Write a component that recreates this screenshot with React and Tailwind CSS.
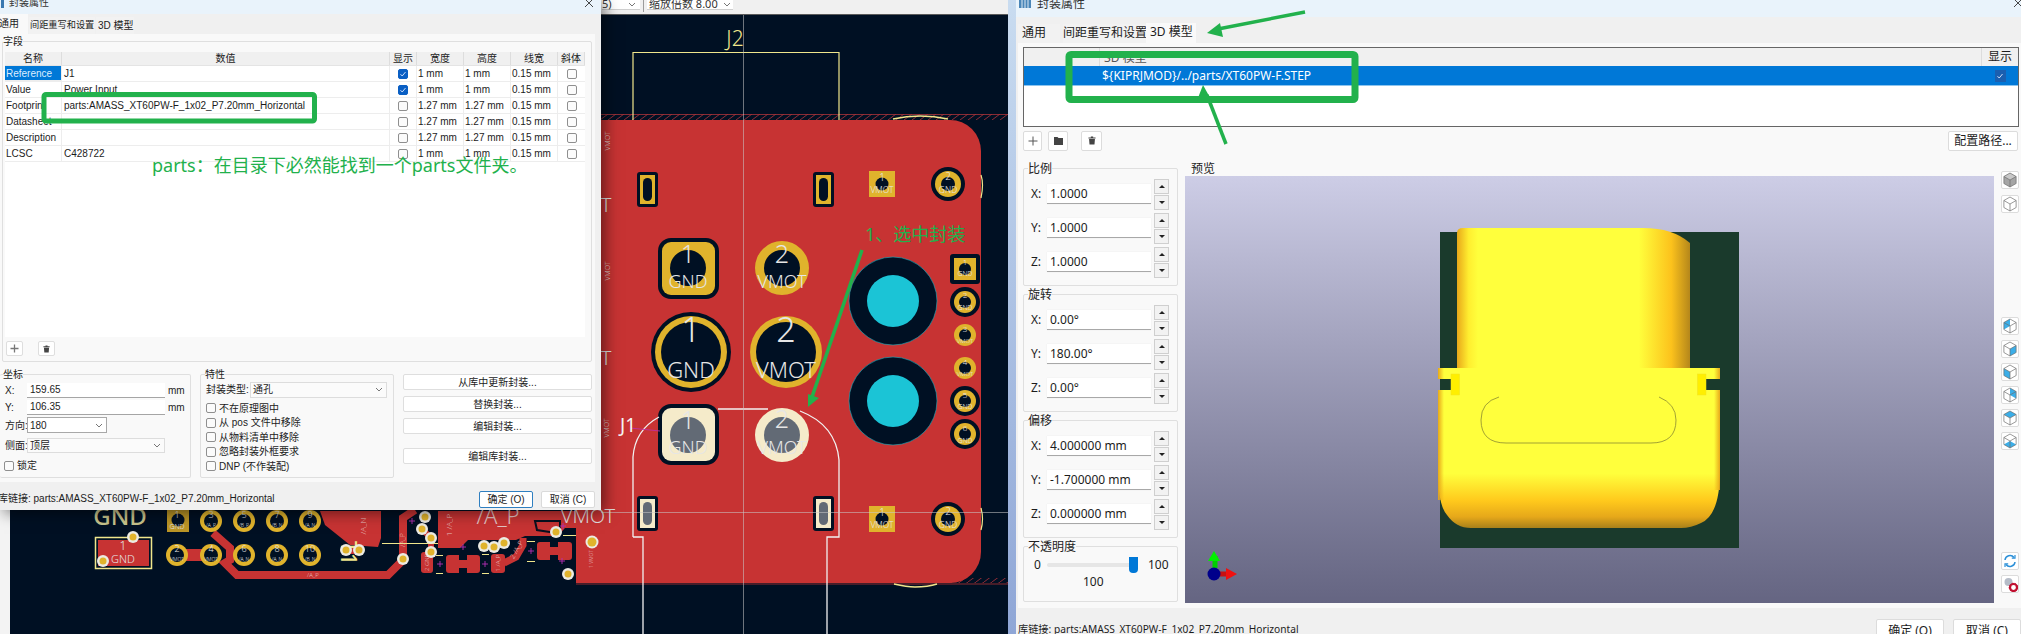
import React from "react";

const Check = ({ on, className = "" }) => (
  <span className={"inline-flex items-center justify-center w-[10px] h-[10px] rounded-[2px] border shrink-0 " + (on ? "bg-[#0a5fc4] border-[#0a5fc4] " : "bg-[#fbfbfb] border-[#8f8f8f] ") + className}>
    {on && (
      <svg width="8" height="8" viewBox="0 0 8 8"><path d="M1.5 4.2 3.2 6 6.5 2" fill="none" stroke="#dfeaff" strokeWidth="0.9" /></svg>
    )}
  </span>
);

const Chevron = ({ className = "" }) => (
  <svg width="8" height="5" viewBox="0 0 8 5" className={className}><path d="M1 1l3 3 3-3" fill="none" stroke="#777" strokeWidth="1" /></svg>
);

const Group = ({ label, className = "", labelClass = "", children }) => (
  <div className={"relative border border-[#dfdfdf] rounded-[2px] " + className}>
    <span className={"absolute left-[4px] -top-[7px] leading-[14px] bg-[#f9f9f9] text-[#222] whitespace-nowrap " + labelClass}>{label}</span>
    {children}
  </div>
);

const TrashIcon = ({ s = 9 }) => (
  <svg width={s} height={s + 1} viewBox="0 0 9 10"><path d="M3.2 0.5h2.6v1H8.5v1.2H.5V1.500h2.700zM1.200 3.300h6.600l-.5 6.200H1.700z" fill="#444" /></svg>
);

const fieldRows = [
  ["Reference", "J1", true, "1 mm", "1 mm"],
  ["Value", "Power Input", true, "1 mm", "1 mm"],
  ["Footprint", "parts:AMASS_XT60PW-F_1x02_P7.20mm_Horizontal", false, "1.27 mm", "1.27 mm"],
  ["Datasheet", "", false, "1.27 mm", "1.27 mm"],
  ["Description", "", false, "1.27 mm", "1.27 mm"],
  ["LCSC", "C428722", false, "1 mm", "1 mm"],
];

const heads = ["名称", "数值", "显示", "宽度", "高度", "线宽", "斜体"];

const LeftDialog = () => (
  <div className="absolute left-0 top-0 w-[601px] h-[510px] flex flex-col bg-[#f0f0f0] text-[10px] text-[#1c1c1c] font-['Liberation_Sans','Noto_Sans_CJK_SC',sans-serif] shadow-[4px_3px_14px_rgba(0,0,0,0.5)]">
    <div className="h-[14px] shrink-0 bg-[#e9f3fb] flex items-center relative">
      <span className="ml-[1px] w-[3px] h-[8px] bg-[#3a78b0] -mt-[6px]" />
      <span className="ml-[5px] -mt-[9px] text-[#333]">封装属性</span>
      <svg className="absolute right-[7px] -top-[2px]" width="10" height="10" viewBox="0 0 10 10"><path d="M1 1l8 8M9 1l-8 8" stroke="#333" strokeWidth="0.9" /></svg>
    </div>
    <div className="h-[20px] shrink-0 flex items-end whitespace-nowrap">
      <div className="w-[28px] h-[20px] bg-[#f9f9f9] flex items-center pb-[1px]"><span className="-ml-[1px]">通用</span></div>
      <div className="ml-[1px] w-[66px] h-[17px] px-[1px] bg-[#f2f2f2] flex items-center text-[9.2px]">间距重写和设置</div>
      <div className="ml-[1px] w-[38px] h-[17px] px-[2px] bg-[#f2f2f2] flex items-center">3D 模型</div>
    </div>
    <div className="h-[448px] w-[595px] shrink-0 bg-[#f9f9f9] pt-[7px] pl-[2px]">
      <Group label="字段" className="w-[590px] h-[321px] pt-[10px] pl-[2px]" labelClass="!left-[0px]">
        <div className="w-[580px] h-[285px] bg-white">
          <div className="grid grid-cols-[57px_328px_27px_47px_47px_47px_27px] h-[14px] bg-[#f0f0f0] border-b border-[#e4e4e4]">
            {heads.map((h) => (
              <div key={h} className="flex items-center justify-center border-r border-[#dddddd] leading-none">{h}</div>
            ))}
          </div>
          {fieldRows.map((r) => (
            <div key={r[0]} className="grid grid-cols-[57px_328px_27px_47px_47px_47px_27px] h-[16px] border-b border-[#ededed] leading-[15px]">
              <div className={"pl-[1px] border-r border-[#ededed] overflow-hidden whitespace-nowrap " + (r[0] === "Reference" ? "bg-[#0078d7] text-[#dceeff] border-b border-[#64aee8]" : "")}>{r[0]}</div>
              <div className="pl-[2px] border-r border-[#ededed] whitespace-nowrap">{r[1]}</div>
              <div className="flex items-center justify-center border-r border-[#ededed]"><Check on={r[2]} /></div>
              <div className="pl-[1px] border-r border-[#ededed] whitespace-nowrap">{r[3]}</div>
              <div className="pl-[1px] border-r border-[#ededed] whitespace-nowrap">{r[4]}</div>
              <div className="pl-[1px] border-r border-[#ededed] whitespace-nowrap">0.15 mm</div>
              <div className="flex items-center justify-center"><Check /></div>
            </div>
          ))}
        </div>
        <div className="flex mt-[4px] ml-[1px]">
          <div className="w-[17px] h-[15px] bg-white border border-[#dedede] rounded-[2px] flex items-center justify-center">
            <svg width="9" height="9" viewBox="0 0 9 9"><path d="M4.500.5v8M.5 4.500h8" stroke="#777" strokeWidth="1.300" /></svg>
          </div>
          <div className="ml-[15px] w-[17px] h-[15px] bg-white border border-[#dedede] rounded-[2px] flex items-center justify-center"><TrashIcon s={7} /></div>
        </div>
      </Group>
      <div className="flex mt-[12px] -ml-[2px]">
        <Group label="坐标" className="w-[191px] h-[104px] pl-[5px] pt-[7px] border-l-0" labelClass="!left-[3px]">
          <div className="flex items-center h-[16px] w-[180px]">
            <span className="w-[22px]">X:</span>
            <div className="w-[138px] h-[15px] bg-white border-b border-[#a5a5a5] pl-[3px] leading-[14px]">159.65</div>
            <span className="ml-[3px]">mm</span>
          </div>
          <div className="flex items-center h-[16px] mt-[1px]">
            <span className="w-[22px]">Y:</span>
            <div className="w-[138px] h-[15px] bg-white border-b border-[#a5a5a5] pl-[3px] leading-[14px]">106.35</div>
            <span className="ml-[3px]">mm</span>
          </div>
          <div className="flex items-center h-[16px] mt-[2px]">
            <span className="w-[22px] whitespace-nowrap">方向:</span>
            <div className="w-[80px] h-[16px] bg-white border border-[#a8a8a8] pl-[2px] flex items-center justify-between pr-[3px]">180<Chevron /></div>
          </div>
          <div className="flex items-center h-[16px] mt-[4px]">
            <span className="w-[22px] whitespace-nowrap">侧面:</span>
            <div className="w-[138px] h-[15px] bg-[#fbfbfb] border border-[#dddddd] pl-[2px] flex items-center justify-between pr-[3px]">顶层<Chevron /></div>
          </div>
          <div className="flex items-center mt-[5px] -ml-[1px]"><Check /><span className="ml-[3px]">锁定</span></div>
        </Group>
        <Group label="特性" className="ml-[9px] w-[194px] h-[104px] pl-[5px] pt-[6px]">
          <div className="flex items-center h-[17px]">
            <span className="w-[44px] whitespace-nowrap">封装类型:</span>
            <div className="w-[137px] h-[16px] bg-[#fbfbfb] border border-[#dddddd] pl-[2px] flex items-center justify-between pr-[3px]">通孔<Chevron /></div>
          </div>
          <div className="mt-[5px] flex flex-col gap-[4.500px]">
            {["不在原理图中", "从 pos 文件中移除", "从物料清单中移除", "忽略封装外框要求", "DNP (不作装配)"].map((t) => (
              <div key={t} className="flex items-center h-[10px]"><Check /><span className="ml-[3px] whitespace-nowrap">{t}</span></div>
            ))}
          </div>
        </Group>
        <div className="ml-[9px] w-[189px] flex flex-col">
          {["从库中更新封装...", "替换封装...", "编辑封装..."].map((t) => (
            <div key={t} className="h-[16px] mb-[6px] bg-white border border-[#dedede] rounded-[2px] flex items-center justify-center">{t}</div>
          ))}
          <div className="h-[16px] mt-[8px] bg-white border border-[#dedede] rounded-[2px] flex items-center justify-center">编辑库封装...</div>
        </div>
      </div>
    </div>
    <div className="flex-1 relative flex items-start pt-[9px]">
      <span className="whitespace-nowrap -ml-[2px]">库链接: parts:AMASS_XT60PW-F_1x02_P7.20mm_Horizontal</span>
      <div className="ml-auto mr-[6px] flex">
        <div className="w-[54px] h-[17px] bg-white border border-[#2f7fc0] rounded-[2px] flex items-center justify-center">确定 (O)</div>
        <div className="ml-[8px] w-[54px] h-[17px] bg-white border border-[#dadada] rounded-[2px] flex items-center justify-center">取消 (C)</div>
      </div>
    </div>
  </div>
);

const INK = "#001023";
const GOLD = "#e0b32c";
const RED = "#c73333";
const CREAM = "#f5ebca";
const SILK = "#f0e68c";

const Label = ({ x, y, size, children, fill = "#e6e6e6", rotate, anchor = "middle", weight = 300 }) => (
  <text x={x} y={y} fontSize={size} fill={fill} textAnchor={anchor} dominantBaseline="middle" fontWeight={weight} transform={rotate ? `rotate(${rotate} ${x} ${y})` : undefined}>{children}</text>
);

const Round = ({ x, y, r, hole, halo, num, net, numSize = 8, netSize = 7, fill = GOLD, holeFill = INK, numY, netY }) => (
  <g>
    {halo && <circle cx={x} cy={y} r={halo} fill={INK} />}
    <circle cx={x} cy={y} r={r} fill={fill} />
    <circle cx={x} cy={y} r={hole} fill={holeFill} />
    {num && <Label x={x} y={numY ?? y - r * 0.5} size={numSize}>{num}</Label>}
    {net && <Label x={x} y={netY ?? y + r * 0.6} size={netSize}>{net}</Label>}
  </g>
);

const Oval = ({ x, y, fill = GOLD, hole = INK }) => (
  <g>
    <rect x={x} y={y} width="21" height="35" rx="3" fill={INK} />
    <rect x={x + 3} y={y + 3} width="15" height="29" fill={fill} />
    <rect x={x + 6} y={y + 6} width="9" height="23" rx="4.500" fill={hole} />
  </g>
);

const Via = ({ x, y, r = 6 }) => (
  <g>
    <circle cx={x} cy={y} r={r} fill="#ecebe3" />
    <circle cx={x} cy={y} r={r - 2.500} fill={GOLD} />
  </g>
);

const Plus = ({ x, y }) => <path d={`M${x - 3} ${y}h6M${x} ${y - 3}v6`} stroke="#b52fb5" strokeWidth="0.9" />;

const SmallSq = ({ x, y, s, num, net }) => (
  <g>
    <rect x={x} y={y} width={s} height={s} fill={GOLD} />
    <circle cx={x + s / 2} cy={y + s / 2} r="6.500" fill={INK} />
    <Label x={x + s / 2} y={y + s * 0.3} size="10">{num}</Label>
    <Label x={x + s / 2} y={y + s * 0.76} size="8.500">{net}</Label>
  </g>
);

const Pcb = () => (
  <svg width="998" height="619" viewBox="10 15 998 619" className="block">
    <rect x="10" y="15" width="998" height="619" fill={INK} />
    <defs>
      <pattern id="hatch" width="8" height="6" patternUnits="userSpaceOnUse">
        <path d="M0 6 8 0" stroke="#b23238" strokeWidth="0.8" />
      </pattern>
    </defs>
    <rect x="601" y="114" width="407" height="6" fill="url(#hatch)" />
    <path d="M601 114.500H1008" stroke="#a8333a" strokeWidth="0.8" />
    <rect x="940" y="578" width="68" height="5" fill="url(#hatch)" />
    <path d="M576 584H1008" stroke="#8c2a30" strokeWidth="1.200" />
    <text x="735" y="40" fontSize="21" fill={SILK} textAnchor="middle" dominantBaseline="middle" fontWeight="300">J2</text>
    <path d="M633 120V52.500H839V120" fill="none" stroke={SILK} strokeWidth="1.200" />
    <path d="M893 119Q920 113 948 119" fill="none" stroke={SILK} strokeWidth="1.500" />

    {/* board */}
    <path d="M576 120H950a31 31 0 0 1 31 31V552a31 31 0 0 1-31 31H576z" fill={RED} />
    <path d="M438 511H602V583H576V528H565L558 536H525L516 540H468L460 548H438z" fill={RED} />
    <path d="M320 511L325 525 350 545 378 547 381 538V511z" fill={RED} />
    <path d="M213 533L230 548V560L225 563 237 575H388L403 560V518L415 510" fill="none" stroke={RED} strokeWidth="8" />
    <path d="M422 529L431 538V552" fill="none" stroke={RED} strokeWidth="6" />
    <rect x="177" y="549" width="34" height="12" fill={RED} />
    <path d="M346 550H359" stroke={RED} strokeWidth="8" />
    <path d="M535 521H560V530L556 533 537 530z" fill={RED} stroke="#08101f" strokeWidth="2" />
    <path d="M981 175Q984 184 981 198M981 508Q984 519 981 530" fill="none" stroke={SILK} strokeWidth="1.200" />
    <path d="M894 584Q907 587 915 587 928 587 937 584" fill="none" stroke={SILK} strokeWidth="1.500" />

    {/* vertical net names */}
    <Label x={608} y={141} size="7" rotate={-90} fill="#e0d0d0">VMOT</Label>
    <Label x={608} y={271} size="7" rotate={-90} fill="#e0d0d0">VMOT</Label>
    <Label x={607} y={428} size="7" rotate={-90} fill="#e0d0d0">VMOT</Label>
    <Label x={606} y={207} size="20" anchor="middle">T</Label>
    <Label x={606} y={360} size="20" anchor="middle">T</Label>

    {/* top row */}
    <Oval x={637} y={172} />
    <Oval x={813} y={172} />
    <SmallSq x={869} y={171} s={26} num="1" net="VMOT" />
    <Round x={948} y={184} r={13} hole={7} halo={17} num="2" net="GND" numSize={10} netSize={8.500} numY={177} netY={191} />

    {/* large pads */}
    <rect x="658" y="238" width="61" height="61" rx="13" fill={INK} />
    <rect x="662" y="242" width="53" height="53" rx="9" fill={GOLD} />
    <circle cx="688" cy="268" r="18" fill={INK} />
    <Label x={688} y={256} size="25">1</Label>
    <Label x={688} y={283} size="18">GND</Label>
    <Round x={782} y={268} r={27} hole={18} num="2" net="VMOT" numSize={25} netSize={18} numY={256} netY={283} />

    <Round x={691} y={352} r={36} hole={30} halo={40} num="1" net="GND" numSize={34} netSize={22} numY={333} netY={372} />
    <Round x={786} y={352} r={36} hole={30} num="2" net="VMOT" numSize={34} netSize={22} numY={333} netY={372} />

    {/* selected footprint */}
    <rect x="658" y="404" width="61" height="61" rx="13" fill={INK} />
    <rect x="662" y="408" width="53" height="53" rx="9" fill={CREAM} />
    <circle cx="688" cy="435" r="18" fill="#626a75" />
    <Label x={688} y={422} size="25">1</Label>
    <Label x={688} y={449} size="18">GND</Label>
    <Round x={782} y={435} r={27} hole={18} fill={CREAM} holeFill="#626a75" num="2" net="VMOT" numSize={25} netSize={18} numY={421} netY={449} />
    <Oval x={637} y={496} fill={CREAM} hole="#626a75" />
    <Oval x={813} y={496} fill={CREAM} hole="#626a75" />
    <path d="M633 537V457Q635 430 659 417M718 409H768M800 411Q836 425 839 460V537H827V634M633 537H643V634" fill="none" stroke="#f2f2f2" strokeWidth="1.300" />
    <path d="M630 428L660 431" stroke="#c02fa0" strokeWidth="0.9" />
    <Label x={628} y={427} size="19" fill="#f5f5f5" weight={400}>J1</Label>

    {/* mounting holes */}
    {[301, 401].map((y) => (
      <g key={y}>
        <circle cx="893" cy={y} r="44" fill={INK} stroke="#1bb4c4" strokeWidth="0.6" />
        <circle cx="893" cy={y} r="26" fill="#1bc4d6" />
      </g>
    ))}

    {/* right header */}
    <rect x="950" y="254" width="30" height="30" rx="3" fill={INK} />
    <rect x="954" y="258" width="22" height="22" fill={GOLD} />
    <circle cx="965" cy="269" r="6" fill={INK} />
    <Label x={965} y={263} size="8">1</Label>
    <Label x={965} y={274} size="7">GND</Label>
    <Round x={965} y={302} r={11} hole={6} halo={15} num="2" net="GND" numY={296} netY={308} />
    <Round x={965} y={335} r={11} hole={6} num="3" net="VMOT" numSize={8} netSize={6} numY={330} netY={341} />
    <Round x={965} y={368} r={11} hole={6} num="4" net="VMOT" numSize={8} netSize={6} numY={363} netY={374} />
    <Round x={965} y={401} r={11} hole={6} halo={15} num="5" net="GND" numY={396} netY={407} />
    <Round x={965} y={434} r={11} hole={6} halo={15} num="6" net="GND" numY={429} netY={441} />

    {/* bottom row right */}
    <SmallSq x={869} y={506} s={26} num="1" net="VMOT" />
    <Round x={948} y={519} r={13} hole={7} halo={17} num="2" net="GND" numSize={10} netSize={8.500} numY={512} netY={526} />

    {/* crosshair */}
    <path d="M743.500 15V634" stroke="#c9c9c9" strokeOpacity="0.55" strokeWidth="1" />
    <path d="M601 512.500H1008" stroke="#c9c9c9" strokeOpacity="0.55" strokeWidth="1" />

    {/* bottom left header */}
    <Label x={120} y={519} size="24" fill="#c9c48c" weight={500}>GND</Label>
    <rect x="167" y="510" width="22" height="22" fill="#bb9526" />
    <circle cx="178" cy="520" r="6.500" fill={INK} />
    <Label x={177} y={516} size="9">1</Label>
    <Label x={177} y={527} size="7">GND</Label>
    {[[211, 521, "3", "/A_P"], [244, 521, "5", "/B_P"], [277, 521, "7", "/B_N"], [310, 521, "9", "/A_N"], [177, 555, "2", "VMOT"], [211, 555, "4", "VMOT"], [244, 555, "6", "/A_N"], [277, 555, "8", "/A_N"], [310, 555, "10", "/B_N"]].map(([x, y, n, l]) => (
      <Round key={n} x={x} y={y} r={11} hole={7} num={n} net={l} numSize={9} netSize={5} numY={y - 5} netY={y + 5} />
    ))}
    <rect x="95.500" y="537.500" width="56" height="31" fill="none" stroke={SILK} strokeWidth="1.500" />
    <rect x="98" y="540" width="51" height="26" fill={RED} />
    <Label x={123} y={547} size="12">1</Label>
    <Label x={123} y={560} size="11">GND</Label>
    <Via x={133} y={537} />
    <Via x={103} y={561} />

    {/* T1 silk */}
    <Label x={347} y={553} size="21" fill={SILK} rotate={90} weight={500}>T1</Label>
    <Via x={346} y={550} />
    <Via x={359} y={550} />
    <path d="M382 543.500H438" stroke={SILK} strokeWidth="1.200" />
    <Label x={313} y={575} size="6" fill="#e6bcbc">/A_P</Label>
    <Label x={364} y={526} size="8" rotate={-90} fill="#e6bcbc">/A_N</Label>
    <Label x={403} y={540} size="7" rotate={-90} fill="#e6bcbc">/A_P</Label>
    <Label x={450} y={525} size="8" rotate={-90} fill="#e6bcbc">1 /A_P</Label>

    {/* big net names */}
    <Label x={498} y={518} size="22" fill="#e3c3c3">/A_P</Label>
    <Label x={588} y={518} size="20" fill="#e3dede">VMOT</Label>

    {/* small parts */}
    <rect x="421" y="552" width="12" height="21" rx="3" fill={RED} />
    <path d="M446 558a3 3 0 0 1 3-3H459V560H467V555H477a3 3 0 0 1 3 3V570a3 3 0 0 1-3 3H467V568H459V573H449a3 3 0 0 1-3-3z" fill={RED} />
    <rect x="491" y="554" width="14" height="19" rx="3" fill={RED} />
    <path d="M504 563L516 557 523 545V538" fill="none" stroke={RED} strokeWidth="7" />
    <path d="M537 545a3 3 0 0 1 3-3H550V547H558V542H569a3 3 0 0 1 3 3V557a3 3 0 0 1-3 3H558V555H550V560H540a3 3 0 0 1-3-3z" fill={RED} />
    <Label x={427} y={562} size="6" rotate={-90} fill="#e6bcbc">2 GND</Label>
    <Label x={498} y={563} size="6" rotate={-90} fill="#e6bcbc">1 /A_P</Label>
    <Label x={517} y={550} size="7" rotate={-60} fill="#e6bcbc">2 /A_P</Label>
    <path d="M527 541.500H535M527 561.500H535M436 555.500H443M436 573.500H443M482 554.500H489M482 573.500H489M563 535.500H576" stroke={SILK} strokeWidth="1.200" />
    {[[412, 521], [463, 547], [440, 564], [485, 564], [531, 551], [563, 526], [562, 561]].map(([x, y]) => <Plus key={x} x={x} y={y} />)}
    {[[425, 517], [422, 529], [431, 538], [431, 552], [403, 559], [484, 546], [494, 547], [504, 543], [556, 532], [568, 574]].map(([x, y]) => <Via key={x + "-" + y} x={x} y={y} />)}
    <circle cx="592" cy="542" r="6.500" fill="#ecebe3" />
    <circle cx="592" cy="542" r="4.500" fill={GOLD} />
    <Label x={592} y={559} size="5" rotate={-90} fill="#e6bcbc">1 VMOT</Label>
  </svg>
);

const Spin = () => (
  <div className="ml-[3px] w-[15px] flex flex-col gap-[1px]">
    {[0, 1].map((i) => (
      <div key={i} className="h-[15px] bg-[#f2f2f2] border border-[#cfcfcf] flex items-center justify-center">
        <svg width="6" height="3" viewBox="0 0 6 3"><path d={i === 0 ? "M3 0l3 3H0z" : "M0 0h6L3 3z"} fill="#222" /></svg>
      </div>
    ))}
  </div>
);

const TriGroup = ({ label, values }) => (
  <Group label={label} className="h-[118px] pt-[9px] pl-[7px]" labelClass="text-[12px]">
    {["X:", "Y:", "Z:"].map((a, i) => (
      <div key={a} className="flex items-center h-[32px] mb-[2px]">
        <span className="w-[16px] text-[12px]">{a}</span>
        <div className="w-[104px] h-[20px] bg-white border-b border-[#a8a8a8] pl-[3px] leading-[19px] shadow-[0_0_1px_rgba(0,0,0,0.1)]">{values[i]}</div>
        <Spin />
      </div>
    ))}
  </Group>
);

const cubeFaces = {
  tl: "1,5 8,1 8,9 1,13",
  right: "15,5 15,13 8,17 8,9",
  left: "1,5 8,9 8,17 1,13",
  tr: "8,1 15,5 15,13 8,9",
  top: "8,1 15,5 8,9 1,5",
  bottom: "1,13 8,9 15,13 8,17",
};

const Cube = ({ face, solid }) => (
  <div className="w-[18px] h-[18px] bg-white border border-[#dcdcdc] rounded-[2px] flex items-center justify-center">
    <svg width="14" height="16" viewBox="0 0 16 18">
      {solid && <polygon points="8,1 15,5 15,13 8,17 1,13 1,5" fill="#a5a5a5" />}
      {solid && <polygon points={cubeFaces.top} fill="#c8c8c8" />}
      {face && <polygon points={cubeFaces[face]} fill="#3baee8" />}
      <path d="M8 1l7 4v8l-7 4-7-4V5zM1 5l7 4 7-4M8 9v8" fill="none" stroke="#6f6f6f" strokeWidth="0.8" />
    </svg>
  </div>
);

const Model3D = () => (
  <svg className="block w-full h-full" viewBox="1184 176 809 427">
    <defs>
      <linearGradient id="upper" x1="0" x2="1" y1="0" y2="0">
        <stop offset="0" stopColor="#e8a81a" />
        <stop offset="0.05" stopColor="#ffee30" />
        <stop offset="0.09" stopColor="#ffff3c" />
        <stop offset="0.78" stopColor="#ffff3c" />
        <stop offset="0.92" stopColor="#fcc21c" />
        <stop offset="1" stopColor="#b5871b" />
      </linearGradient>
      <linearGradient id="lower" x1="0" x2="0" y1="0" y2="1">
        <stop offset="0" stopColor="#ffff3c" />
        <stop offset="0.66" stopColor="#ffff3c" />
        <stop offset="0.83" stopColor="#ffc91c" />
        <stop offset="0.93" stopColor="#e6a81a" />
        <stop offset="1" stopColor="#a8801a" />
      </linearGradient>
      <linearGradient id="edgeL" x1="0" x2="1" y1="0" y2="0">
        <stop offset="0" stopColor="#e8a81a" />
        <stop offset="1" stopColor="#e8a81a" stopOpacity="0" />
      </linearGradient>
      <linearGradient id="edgeR" x1="0" x2="1" y1="0" y2="0">
        <stop offset="0" stopColor="#e8a81a" stopOpacity="0" />
        <stop offset="1" stopColor="#e8a81a" />
      </linearGradient>
    </defs>
    <rect x="1439" y="232" width="299" height="316" fill="#1a3a2c" />
    <path d="M1456 368V233q0-5 6-5H1642q30 0 47 15V368z" fill="url(#upper)" />
    <path d="M1437 368H1719V379H1705V390H1719V470Q1719 515 1700 523 1690 528 1680 528H1470Q1455 528 1446 515 1437 505 1437 470V390H1450V379H1437z" fill="url(#lower)" />
    <path d="M1437 368h6v11h-6zM1437 390h6V500h-6z" fill="url(#edgeL)" />
    <path d="M1713 390h6V490h-6zM1713 368h6v11h-6z" fill="url(#edgeR)" />
    <rect x="1450" y="374" width="8.500" height="21" fill="#ffef00" stroke="#f2e220" strokeWidth="0.5" />
    <rect x="1696.500" y="374" width="8.500" height="21" fill="#ffef00" stroke="#f2e220" strokeWidth="0.5" />
    <path d="M1498 397Q1480 402 1480 420 1480 443 1505 443H1650Q1675 443 1675 420 1675 404 1658 397" fill="none" stroke="#8a8a30" strokeWidth="0.8" />
    <path d="M1214 568V556" stroke="#00d000" strokeWidth="5" />
    <path d="M1213 551l6 10h-12z" fill="#00f000" />
    <path d="M1218 574H1228" stroke="#c81010" strokeWidth="5" />
    <path d="M1236 574l-11 6v-12z" fill="#f01010" />
    <circle cx="1213" cy="574" r="6.500" fill="#00008b" />
  </svg>
);

const RightDialog = () => (
  <div className="absolute left-[1016px] top-0 w-[1005px] h-[634px] flex flex-col bg-[#f0f0f0] text-[12px] text-[#1c1c1c]">
    <div className="h-[17px] shrink-0 bg-[#e9f3fb] flex items-start relative">
      <svg className="ml-[3px] -mt-[1px]" width="12" height="9" viewBox="0 0 12 9"><rect width="12" height="9" fill="#4a86b8" /><path d="M3 0v9M6 0v9M9 0v9" stroke="#ddeaf5" /></svg>
      <span className="ml-[6px] -mt-[5px] text-[#333]">封装属性</span>
      <svg className="absolute right-0 -top-[2px]" width="8" height="10" viewBox="0 0 8 10"><path d="M1 1l8 8M9 1l-8 8" stroke="#333" strokeWidth="0.9" /></svg>
    </div>
    <div className="h-[26px] shrink-0 flex items-end pl-[2px]">
      <div className="w-[42px] h-[19px] pl-[4px] bg-[#f2f2f2] leading-[18px]">通用</div>
      <div className="ml-[3px] w-[83px] h-[19px] bg-[#f2f2f2] leading-[18px] whitespace-nowrap">间距重写和设置</div>
      <div className="w-[50px] h-[20px] pl-[4px] bg-[#f9f9f9] leading-[18px] whitespace-nowrap">3D 模型</div>
    </div>
    <div className="h-[565px] shrink-0 ml-[2px] mr-0 bg-[#f9f9f9] pt-[4px] pl-[5px]">
      <div className="w-[996px] h-[80px] bg-white border border-[#666]">
        <div className="flex h-[18px] bg-[#f0f0f0]">
          <div className="w-[76px] border-r border-[#dcdcdc]" />
          <div className="w-[882px] border-r border-[#dcdcdc] pl-[4px] leading-[20px] text-[#555]">3D 模型</div>
          <div className="flex-1 text-center leading-[18px]">显示</div>
        </div>
        <div className="flex h-[20px] bg-[#0078d7] border-b border-[#8cc4ee] text-white leading-[19px]">
          <div className="w-[76px]" />
          <div className="w-[882px] pl-[2px] whitespace-nowrap">{"${KIPRJMOD}/../parts/XT60PW-F.STEP"}</div>
          <div className="flex-1 flex items-center justify-center">
            <span className="w-[11px] h-[12px] bg-[#1a5fb0] flex items-center justify-center">
              <svg width="8" height="8" viewBox="0 0 8 8"><path d="M1.500 4.200 3.200 6 6.500 2" fill="none" stroke="#dfeaff" strokeWidth="0.9" /></svg>
            </span>
          </div>
        </div>
      </div>
      <div className="flex items-center mt-[3px] h-[21px]">
        <div className="w-[19px] h-[20px] bg-white border border-[#dcdcdc] rounded-[2px] flex items-center justify-center">
          <svg width="10" height="10" viewBox="0 0 10 10"><path d="M5 .5v9M.5 5h9" stroke="#555" strokeWidth="1" /></svg>
        </div>
        <div className="ml-[6px] w-[20px] h-[20px] bg-white border border-[#dcdcdc] rounded-[2px] flex items-center justify-center">
          <svg width="9" height="9" viewBox="0 0 9 9"><path d="M0 1h3.500l1 1H9v7H0z" fill="#444" /></svg>
        </div>
        <div className="ml-[13px] w-[21px] h-[20px] bg-white border border-[#dcdcdc] rounded-[2px] flex items-center justify-center"><TrashIcon s={8} /></div>
        <div className="ml-[846px] w-[70px] h-[20px] bg-white border border-[#dcdcdc] rounded-[2px] flex items-center justify-center whitespace-nowrap">配置路径...</div>
      </div>
      <div className="flex mt-[11px]">
        <div className="w-[155px] shrink-0 pt-[6px] flex flex-col gap-[8px]">
          <TriGroup label="比例" values={["1.0000", "1.0000", "1.0000"]} />
          <TriGroup label="旋转" values={["0.00°", "180.00°", "0.00°"]} />
          <TriGroup label="偏移" values={["4.000000 mm", "-1.700000 mm", "0.000000 mm"]} />
          <Group label="不透明度" className="h-[56px] pt-[10px] pl-[7px]">
            <div className="flex items-center h-[16px]">
              <span className="w-[16px] pl-[3px]">0</span>
              <div className="relative w-[87px] h-[4px] bg-[#e6e6e6] rounded-[2px]">
                <div className="absolute right-[-4px] -top-[6px] w-[9px] h-[16px] bg-[#0078d7] rounded-b-[4px]" />
              </div>
              <span className="ml-[14px]">100</span>
            </div>
            <div className="mt-[1px] pl-[52px] leading-[16px]">100</div>
          </Group>
        </div>
        <div className="ml-[7px] w-[809px] shrink-0 flex flex-col">
          <div className="h-[14px] pl-[6px] leading-[14px]">预览</div>
          <div className="h-[427px] bg-gradient-to-b from-[#cdcde6] to-[#656582]"><Model3D /></div>
        </div>
        <div className="ml-[7px] w-[18px] shrink-0 pt-[9px] flex flex-col">
          <Cube solid />
          <div className="mt-[6px]"><Cube /></div>
          <div className="mt-[104px] flex flex-col gap-[5px]">
            <Cube face="tl" />
            <Cube face="right" />
            <Cube face="left" />
            <Cube face="tr" />
            <Cube face="top" />
            <Cube face="bottom" />
          </div>
          <div className="mt-[102px] flex flex-col gap-[5px]">
            <div className="w-[18px] h-[18px] bg-white border border-[#dcdcdc] rounded-[2px] flex items-center justify-center">
              <svg width="14" height="14" viewBox="0 0 14 14" fill="none" stroke="#2a8fd8" strokeWidth="1.500"><path d="M2 6a5 5 0 0 1 9-2.500M12 8a5 5 0 0 1-9 2.500" /><path d="M12 1v3.200H8.800M2 13V9.800h3.200" strokeWidth="1.200" /></svg>
            </div>
            <div className="w-[18px] h-[18px] bg-white border border-[#dcdcdc] rounded-[2px] flex items-center justify-center">
              <svg width="15" height="15" viewBox="0 0 15 15"><circle cx="5.500" cy="5" r="4" fill="#b5bcc8" /><circle cx="10.500" cy="10.500" r="3.500" fill="none" stroke="#c01030" strokeWidth="2.200" /><circle cx="10.500" cy="10.500" r="4.300" fill="none" stroke="#c01030" strokeWidth="1" strokeDasharray="1.500 1.500" /></svg>
            </div>
          </div>
        </div>
      </div>
    </div>
    <div className="flex-1 relative flex items-start pl-[2px]">
      <span className="whitespace-nowrap pt-[14px] leading-[14px] text-[10.2px]">库链接: parts:AMASS_XT60PW-F_1x02_P7.20mm_Horizontal</span>
      <div className="ml-auto flex pt-[11px]">
        <div className="w-[68px] h-[24px] bg-white border border-[#dcdcdc] rounded-[2px] text-center leading-[22px]">确定 (O)</div>
        <div className="ml-[9px] w-[68px] h-[24px] bg-white border border-[#dcdcdc] rounded-[2px] text-center leading-[22px]">取消 (C)</div>
      </div>
    </div>
  </div>
);

const Annotations = () => (
  <svg className="absolute left-0 top-0 pointer-events-none" width="2021" height="634" viewBox="0 0 2021 634">
    <rect x="44" y="94.500" width="270.500" height="26.500" rx="2" fill="none" stroke="#22b14c" strokeWidth="5" />
    <rect x="1069" y="54.500" width="286" height="45" rx="2" fill="none" stroke="#22b14c" strokeWidth="7" />
    <path d="M1226 144L1207 95" stroke="#22b14c" strokeWidth="3.500" />
    <path d="M1203 85L1196 103H1213z" fill="#22b14c" />
    <path d="M1305 12L1218 29" stroke="#22b14c" strokeWidth="3.500" />
    <path d="M1207 33L1220 23 1223 37z" fill="#22b14c" />
    <path d="M862 250L812 397" stroke="#22b14c" strokeWidth="3.500" />
    <path d="M808 407L808 394 819 398z" fill="#22b14c" />
  </svg>
);

export default function App() {
  return (
    <div className="relative w-[2021px] h-[634px] overflow-hidden bg-[#f3f3f3] font-['Noto_Sans','Noto_Sans_CJK_SC',sans-serif]">
      <div className="flex h-full">
        <div className="w-[10px] h-full bg-[#f3f3f3] shrink-0" />
        <div className="w-[998px] shrink-0 flex flex-col">
          <div className="h-[15px] shrink-0 bg-[#f0f0f0] border-b border-[#5a5a5a] flex items-start pl-[592px] text-[11px] text-[#333]">
            <div className="w-[38px] h-[10px] bg-white border-b border-[#cfcfcf] flex items-center justify-between pr-[4px] leading-none"><span className="-mt-[3px]">5)</span><Chevron /></div>
            <div className="ml-[3px] w-[1px] h-[12px] bg-[#9b9b9b]" />
            <div className="ml-[3px] w-[86px] h-[10px] bg-white border-b border-[#cfcfcf] flex items-center justify-between px-[2px] leading-none"><span className="-mt-[3px] whitespace-nowrap">缩放倍数 8.00</span><Chevron /></div>
          </div>
          <Pcb />
        </div>
        <div className="flex-1 bg-gradient-to-b from-[#c9dcf0] to-[#8fa6d6]" />
      </div>
      <LeftDialog />
      <RightDialog />
      <Annotations />
      <span className="absolute left-[152px] top-[152px] text-[18px] leading-[26px] text-[#22b14c] whitespace-nowrap">parts：在目录下必然能找到一个parts文件夹。</span>
      <span className="absolute left-[865px] top-[221px] text-[18px] leading-[26px] text-[#22b14c] whitespace-nowrap">1、选中封装</span>
    </div>
  );
}
